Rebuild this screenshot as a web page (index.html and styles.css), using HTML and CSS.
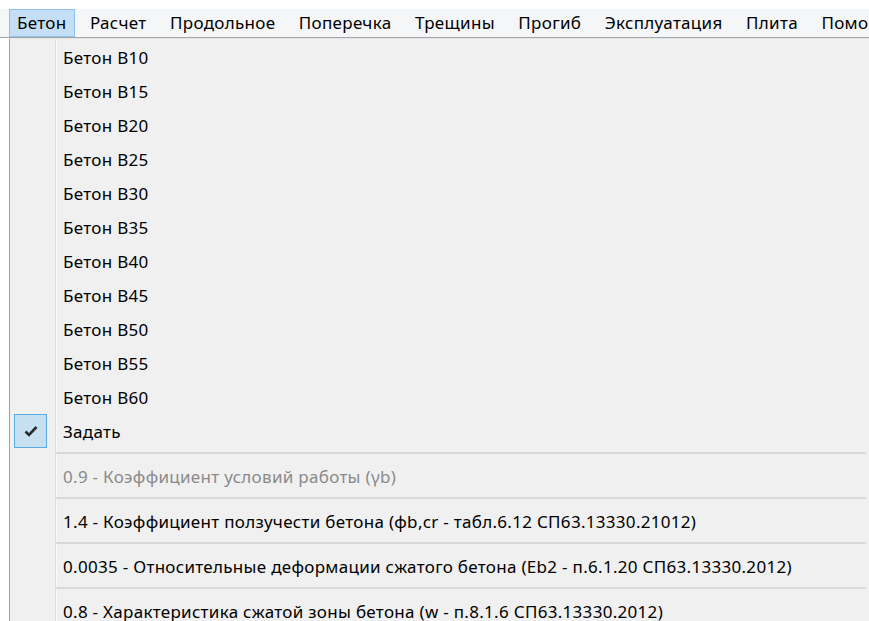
FILE: index.html
```html
<!DOCTYPE html>
<html lang="ru">
<head>
<meta charset="utf-8">
<title>Бетон</title>
<link rel="stylesheet" href="styles.css">
</head>
<body>
<div class="app">
  <nav class="menubar">
    <span class="menu-item active">Бетон</span>
    <span class="menu-item">Расчет</span>
    <span class="menu-item">Продольное</span>
    <span class="menu-item">Поперечка</span>
    <span class="menu-item">Трещины</span>
    <span class="menu-item">Прогиб</span>
    <span class="menu-item">Эксплуатация</span>
    <span class="menu-item">Плита</span>
    <span class="menu-item">Помощь</span>
  </nav>
  <div class="dropdown">
    <div class="list">
      <div class="row"><span class="gutter"></span><span class="label">Бетон B10</span></div>
      <div class="row"><span class="gutter"></span><span class="label">Бетон B15</span></div>
      <div class="row"><span class="gutter"></span><span class="label">Бетон B20</span></div>
      <div class="row"><span class="gutter"></span><span class="label">Бетон B25</span></div>
      <div class="row"><span class="gutter"></span><span class="label">Бетон B30</span></div>
      <div class="row"><span class="gutter"></span><span class="label">Бетон B35</span></div>
      <div class="row"><span class="gutter"></span><span class="label">Бетон B40</span></div>
      <div class="row"><span class="gutter"></span><span class="label">Бетон B45</span></div>
      <div class="row"><span class="gutter"></span><span class="label">Бетон B50</span></div>
      <div class="row"><span class="gutter"></span><span class="label">Бетон B55</span></div>
      <div class="row"><span class="gutter"></span><span class="label">Бетон B60</span></div>
      <div class="row">
        <span class="gutter">
          <span class="check">
            <svg width="14" height="12" viewBox="0 0 14 12"><path d="M1.5 6.5 L5 10 L12.5 2" fill="none" stroke="#2b2b2b" stroke-width="2.6"/></svg>
          </span>
        </span>
        <span class="label">Задать</span>
      </div>
      <div class="sep"><span class="gutter"></span><span class="line"></span></div>
      <div class="row disabled"><span class="gutter"></span><span class="label">0.9 - Коэффициент условий работы (γb)</span></div>
      <div class="sep"><span class="gutter"></span><span class="line"></span></div>
      <div class="row"><span class="gutter"></span><span class="label">1.4 - Коэффициент ползучести бетона (фb,cr - табл.6.12 СП63.13330.21012)</span></div>
      <div class="sep"><span class="gutter"></span><span class="line"></span></div>
      <div class="row"><span class="gutter"></span><span class="label">0.0035 - Относительные деформации сжатого бетона (Eb2 - п.6.1.20 СП63.13330.2012)</span></div>
      <div class="sep"><span class="gutter"></span><span class="line"></span></div>
      <div class="row"><span class="gutter"></span><span class="label">0.8 - Характеристика сжатой зоны бетона (w - п.8.1.6 СП63.13330.2012)</span></div>
    </div>
  </div>
</div>
</body>
</html>
```

FILE: styles.css
```css
html, body {
  margin: 0;
  padding: 0;
  background: #ffffff;
  overflow: hidden;
}

.app {
  width: 869px;
  height: 621px;
  padding-top: 9px;
  box-sizing: border-box;
  font-family: "Noto Sans", "Open Sans", sans-serif;
  font-size: 17px;
  letter-spacing: 0.3px;
  color: #000;
}

/* top menu bar */
.menubar {
  display: flex;
  height: 28px;
  padding-left: 9px;
  background: #f5f6f7;
  border-bottom: 1px solid #a3a3a3;
  white-space: nowrap;
  overflow: hidden;
}

.menu-item {
  display: flex;
  align-items: center;
  padding: 0 8px 1px 7px;
  margin-right: 6.5px;
  border: 1px solid transparent;
  box-sizing: border-box;
  height: 28px;
}

.menu-item.active {
  background: #c4def6;
  border-color: #8fc0ea;
}

/* drop-down list under the first menu */
.dropdown {
  margin-left: 9px;
  height: 600px;
  background: #f0f0f0;
  border-left: 1px solid #a0a0a0;
  border-top: 1px solid #e6e6e6;
}

.list {
  padding-top: 1px;
}

.row {
  display: flex;
  height: 34px;
}

.gutter {
  flex: 0 0 45px;
  display: flex;
  align-items: center;
  border-right: 1px solid #dcdcdc;
  box-shadow: 1px 0 0 #fafafa;
}

.label {
  display: flex;
  align-items: center;
  padding-left: 7px;
  white-space: nowrap;
}

.row.disabled .label {
  color: #8a8a8a;
}

.check {
  width: 31px;
  height: 32px;
  margin-left: 4px;
  display: flex;
  align-items: center;
  justify-content: center;
  background: #c6e0f1;
  border: 1px solid #5aade4;
}

.sep {
  display: flex;
  height: 11px;
}

.sep .line {
  flex: 1;
  margin: 4px 3px 0 0;
  height: 2px;
  background: #d9d9d9;
}
```
